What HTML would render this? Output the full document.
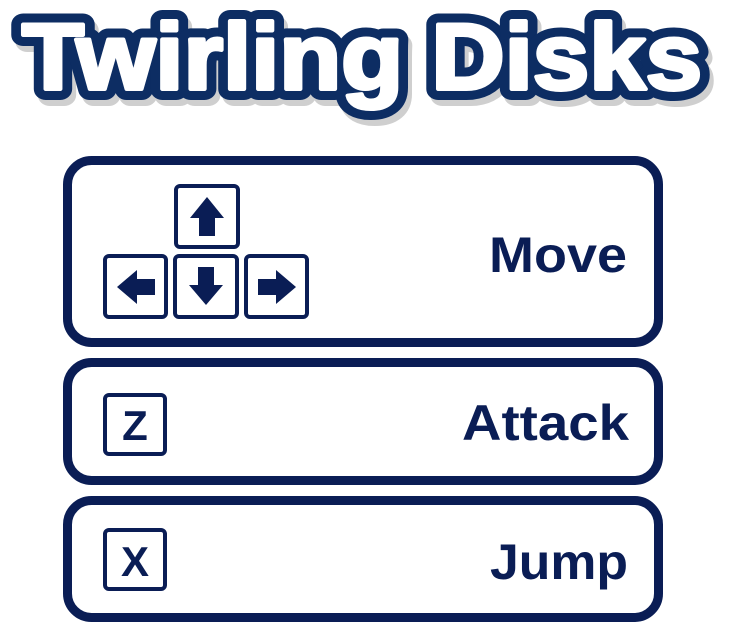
<!DOCTYPE html>
<html><head><style>
html,body{margin:0;padding:0;background:#fff;width:730px;height:626px;overflow:hidden}
svg{display:block}
</style></head><body>
<svg width="730" height="626" viewBox="0 0 730 626" xmlns="http://www.w3.org/2000/svg">
<g font-family="Liberation Sans, sans-serif" font-weight="bold" font-size="94" stroke-linejoin="round">
<text x="26" y="95" textLength="680" lengthAdjust="spacingAndGlyphs" fill="#cfcfcf" stroke="#cfcfcf" stroke-width="22">Twirling Disks</text>
<text x="22" y="89" textLength="680" lengthAdjust="spacingAndGlyphs" fill="#0d2d63" stroke="#0d2d63" stroke-width="22">Twirling Disks</text>
<text x="22" y="89" textLength="680" lengthAdjust="spacingAndGlyphs" fill="#fff" stroke="#fff" stroke-width="4">Twirling Disks</text>
</g>
<g fill="#fff" stroke="#0a1d55" stroke-width="9">
<rect x="67.5" y="160.5" width="591" height="182" rx="24"/>
<rect x="67.5" y="362.5" width="591" height="118" rx="24"/>
<rect x="67.5" y="500.5" width="591" height="117" rx="24"/>
</g>
<g fill="#fff" stroke="#0a1d55" stroke-width="4">
<rect x="176" y="186" width="62" height="61" rx="4"/>
<rect x="105" y="256" width="61" height="61" rx="4"/>
<rect x="175" y="256" width="62" height="61" rx="4"/>
<rect x="246" y="256" width="61" height="61" rx="4"/>
<rect x="105" y="395" width="60" height="59" rx="4"/>
<rect x="105" y="530" width="60" height="59" rx="4"/>
</g>
<g fill="#0a1d55">
<path d="M207 197 L224 218 L215 218 L215 236 L199 236 L199 218 L190 218 Z"/>
<path d="M206 305 L223 285 L214 285 L214 267 L198 267 L198 285 L189 285 Z"/>
<path d="M117 287 L137 270 L137 279 L155 279 L155 295 L137 295 L137 304 Z"/>
<path d="M296 287 L276 270 L276 279 L258 279 L258 295 L276 295 L276 304 Z"/>
</g>
<g font-family="Liberation Sans, sans-serif" font-weight="bold" fill="#0a1d55">
<text x="135" y="440" font-size="42" text-anchor="middle">Z</text>
<text x="135" y="576" font-size="42" text-anchor="middle">X</text>
</g>
<g font-family="Liberation Sans, sans-serif" font-weight="bold" fill="#0a1d55" font-size="50">
<text x="489" y="272" textLength="138" lengthAdjust="spacingAndGlyphs">Move</text>
<text x="462" y="440" textLength="167" lengthAdjust="spacingAndGlyphs">Attack</text>
<text x="490" y="579" textLength="138" lengthAdjust="spacingAndGlyphs">Jump</text>
</g>
</svg>
</body></html>
